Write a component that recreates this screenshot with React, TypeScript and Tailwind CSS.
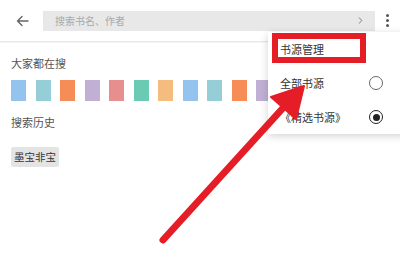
import { ChevronRight } from 'lucide-react';

const swatches = [
    '#94c4ee', '#95ced6', '#f68d57', '#c1b0d4', '#e78f8f', '#6bcab3', '#f5bc80',
    '#94c4ee', '#95ced6', '#f68d57', '#c1b0d4', '#e78f8f', '#6bcab3', '#f5bc80',
];

const font = { fontFamily: '"Noto Sans CJK SC", "Noto Sans", sans-serif' };

const Radio = ({ checked }: { checked?: boolean }) => (
    <span
        className={`flex h-[14px] w-[14px] items-center justify-center rounded-full border-[1.5px] ${
            checked ? 'border-[#222]' : 'border-[#666]'
        }`}
    >
        {checked && <span className="h-[7px] w-[7px] rounded-full bg-[#222]" />}
    </span>
);

export default function App() {
    return (
        <div className="relative h-[268px] w-[400px] overflow-hidden bg-white" style={font}>
            {/* top bar */}
            <div className="flex h-[42px] items-center border-b border-[#e6e6e6] pl-[16px] pr-[8px] shadow-[0_1px_1px_rgba(0,0,0,0.03)]">
                <svg width="13" height="12" viewBox="0 0 13 12" className="shrink-0">
                    <path d="M12 6H1.5M6 1.5L1.5 6L6 10.5" fill="none" stroke="#666" strokeWidth="1.4" strokeLinecap="round" strokeLinejoin="round" />
                </svg>
                <div className="ml-[14px] flex h-[20px] w-[332px] items-center bg-[#e8e8e8] pl-[12px] pr-[9px]">
                    <span className="flex-1 text-[10px] leading-none text-[#a8a8a8]">搜索书名、作者</span>
                    <ChevronRight size={11} strokeWidth={2} className="text-[#777]" />
                </div>
                <div className="ml-[11px] flex flex-col items-center gap-[2.5px]">
                    <span className="h-[2.5px] w-[2.5px] rounded-full bg-[#555]" />
                    <span className="h-[2.5px] w-[2.5px] rounded-full bg-[#555]" />
                    <span className="h-[2.5px] w-[2.5px] rounded-full bg-[#555]" />
                </div>
            </div>

            {/* content */}
            <div className="px-[11px] pt-[14px]">
                <div className="text-[11px] leading-[14px] text-[#555]">大家都在搜</div>
                <div className="mt-[10px] flex gap-[9.5px]">
                    {swatches.map((c, i) => (
                        <span key={i} className="h-[21px] w-[15px] shrink-0" style={{ backgroundColor: c }} />
                    ))}
                </div>
                <div className="mt-[14px] text-[11px] leading-[14px] text-[#555]">搜索历史</div>
                <div className="mt-[18px] flex">
                    <span className="flex h-[20px] items-center rounded-[2px] bg-[#e4e4e4] px-[3px] text-[10.5px] text-[#333]">墨宝非宝</span>
                </div>
            </div>

            {/* popup menu */}
            <div className="absolute left-[268px] top-[32px] w-[140px] bg-white text-[11px] text-[#333] shadow-[0_2px_8px_rgba(0,0,0,0.18)]">
                <div className="flex h-[34px] items-center pl-[12px]">
                    <span>书源管理</span>
                </div>
                <div className="flex h-[34px] items-center justify-between pl-[12px] pr-[25px]">
                    <span>全部书源</span>
                    <Radio />
                </div>
                <div className="flex h-[34px] items-center justify-between pl-[12px] pr-[25px]">
                    <span>《精选书源》</span>
                    <Radio checked />
                </div>
            </div>

            {/* annotation: red box + arrow */}
            <div className="absolute left-[272px] top-[33px] h-[30px] w-[94px] border-[6px] border-[#e41d26]" />
            <svg className="absolute left-0 top-0" width="400" height="268" viewBox="0 0 400 268">
                <line x1="163" y1="240" x2="283" y2="108" stroke="#e41d26" strokeWidth="7" strokeLinecap="round" />
                <polygon points="304,86 296,119 271,97" fill="#e41d26" stroke="#e41d26" strokeWidth="2" strokeLinejoin="round" />
            </svg>
        </div>
    );
}
